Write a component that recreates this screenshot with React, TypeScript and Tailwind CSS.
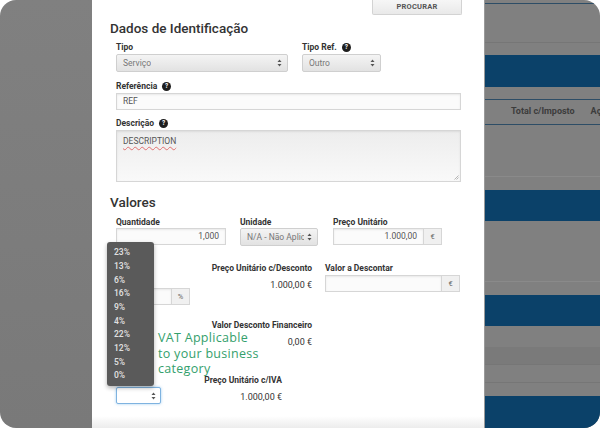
import type { ReactNode } from "react";

const vatRates = ["23%", "13%", "6%", "16%", "9%", "4%", "22%", "12%", "5%", "0%"];

function Help() {
  return (
    <span className="ml-[5px] inline-flex h-[9px] w-[9px] items-center justify-center rounded-full bg-[#1e1e1e] text-[6.5px] font-bold leading-none text-white">
      ?
    </span>
  );
}

function Label({ children, help }: { children?: ReactNode; help?: boolean }) {
  return (
    <div className="flex h-[11px] items-center whitespace-nowrap text-[8.5px] font-bold leading-[11px] text-[#333]">
      {children}
      {help && <Help />}
    </div>
  );
}

function Arrows() {
  return (
    <svg width="5" height="8" viewBox="0 0 5 8" className="shrink-0">
      <path d="M2.5 0.5 L4.5 3 L0.5 3 Z" fill="#555" />
      <path d="M2.5 7.5 L4.5 5 L0.5 5 Z" fill="#555" />
    </svg>
  );
}

function Select({ value, className }: { value: string; className: string }) {
  return (
    <div
      className={`flex h-[18px] items-center justify-between gap-[3px] rounded-[2px] border border-[#cfcfcf] bg-gradient-to-b from-[#f4f4f4] to-[#e2e2e2] pl-[6px] pr-[5px] text-[8.5px] text-[#777] ${className}`}
    >
      <span className="overflow-hidden whitespace-nowrap">{value}</span>
      <Arrows />
    </div>
  );
}

function Input({ value, className, right }: { value?: string; className: string; right?: boolean }) {
  return (
    <div
      className={`flex h-[17px] items-center border border-[#d6d6d6] bg-[#fbfbfb] px-[6px] text-[8.5px] text-[#555] shadow-[inset_0_1px_2px_rgba(0,0,0,0.08)] ${right ? "justify-end" : ""} ${className}`}
    >
      {value}
    </div>
  );
}

function Addon({ children }: { children: ReactNode }) {
  return (
    <div className="flex h-[17px] w-[18px] items-center justify-center border border-l-0 border-[#d6d6d6] bg-[#f0f0f0] text-[7.5px] text-[#666]">
      {children}
    </div>
  );
}

function Value({ children }: { children: ReactNode }) {
  return <div className="h-[11px] text-[9px] leading-[11px] text-[#333]">{children}</div>;
}

export default function App() {
  return (
    <div className="bg-white">
      <div className="relative flex h-[428px] w-[600px] overflow-hidden rounded-[16px] font-['Roboto',sans-serif]">
        {/* dimmed page on the left */}
        <div className="w-[92px] shrink-0 bg-gradient-to-b from-[#808080] to-[#797979]" />

        {/* modal body */}
        <div className="flex w-[392px] shrink-0 flex-col bg-white">
          <div className="flex justify-end pr-[22px]">
            <div className="flex h-[15px] w-[90px] items-center justify-center rounded-b-[2px] border border-t-0 border-[#d3d3d3] bg-gradient-to-b from-[#f6f6f6] to-[#e9e9e9] text-[7.5px] font-bold tracking-[0.2px] text-[#555]">
              PROCURAR
            </div>
          </div>

          <div className="pl-[18px]">
            <h2 className="mt-[5px] h-[16px] text-[13.5px] font-medium leading-[16px] text-[#333]">
              Dados de Identificação
            </h2>

            <div className="pl-[6px]">
              <div className="mt-[6px] flex gap-[14px]">
                <div>
                  <Label>Tipo</Label>
                  <Select value="Serviço" className="mt-[1px] w-[172px]" />
                </div>
                <div>
                  <Label help>Tipo Ref.</Label>
                  <Select value="Outro" className="mt-[1px] w-[79px]" />
                </div>
              </div>

              <div className="mt-[9px]">
                <Label help>Referência</Label>
                <Input value="REF" className="mt-[1px] w-[345px]" />
              </div>

              <div className="mt-[8px]">
                <Label help>Descrição</Label>
                <div className="relative mt-[1px] h-[52px] w-[345px] border border-[#d6d6d6] bg-gradient-to-b from-[#ededed] to-[#f9f9f9] px-[6px] pt-[4px] text-[8.5px] text-[#555] shadow-[inset_0_1px_2px_rgba(0,0,0,0.08)]">
                  <span className="underline decoration-[#e07070] decoration-wavy underline-offset-[2px]">
                    DESCRIPTION
                  </span>
                  <svg width="5" height="5" viewBox="0 0 5 5" className="absolute bottom-[1px] right-[1px]">
                    <path d="M4.5 0.5 L0.5 4.5 M4.5 2.5 L2.5 4.5" stroke="#999" strokeWidth="0.7" />
                  </svg>
                </div>
              </div>
            </div>

            <h2 className="mt-[12px] h-[16px] text-[13.5px] font-medium leading-[16px] text-[#333]">
              Valores
            </h2>

            <div className="pl-[6px]">
              <div className="mt-[7px] flex">
                <div className="w-[110px]">
                  <Label>Quantidade</Label>
                  <Input value="1,000" right className="w-[110px]" />
                </div>
                <div className="ml-[14px] w-[78px]">
                  <Label>Unidade</Label>
                  <Select value="N/A - Não Aplicável" className="w-[78px]" />
                </div>
                <div className="ml-[15px]">
                  <Label>Preço Unitário</Label>
                  <div className="flex">
                    <Input value="1.000,00" right className="w-[91px]" />
                    <Addon>€</Addon>
                  </div>
                </div>
              </div>

              <div className="mt-[17px] flex">
                <div className="w-[76px]">
                  <Label />
                  <div className="mt-[14px] flex">
                    <Input className="w-[56px]" />
                    <Addon>%</Addon>
                  </div>
                </div>
                <div className="ml-[8px] flex w-[112px] flex-col items-end">
                  <Label>Preço Unitário c/Desconto</Label>
                  <div className="mt-[6px]">
                    <Value>1.000,00 €</Value>
                  </div>
                </div>
                <div className="ml-[13px]">
                  <Label>Valor a Descontar</Label>
                  <div className="mt-[1px] flex">
                    <Input className="w-[117px]" />
                    <Addon>€</Addon>
                  </div>
                </div>
              </div>

              <div className="mt-[15px] flex">
                <div className="w-[76px]" />
                <div className="ml-[8px] flex w-[112px] flex-col items-end">
                  <Label>Valor Desconto Financeiro</Label>
                  <div className="mt-[6px]">
                    <Value>0,00 €</Value>
                  </div>
                </div>
              </div>

              <div className="mt-[27px] flex">
                <div className="w-[45px]">
                  <Label />
                  <div className="mt-[1px] flex h-[17px] w-[45px] items-center justify-end rounded-[2px] border border-[#7fb3e0] bg-white pr-[4px] shadow-[0_0_3px_rgba(102,175,233,0.6)]">
                    <Arrows />
                  </div>
                </div>
                <div className="ml-[9px] flex w-[112px] flex-col items-end">
                  <Label>Preço Unitário c/IVA</Label>
                  <div className="mt-[6px]">
                    <Value>1.000,00 €</Value>
                  </div>
                </div>
              </div>
            </div>
          </div>

          <div className="mt-auto h-[12px] bg-gradient-to-b from-white to-[#ececec]" />
        </div>

        {/* dimmed table behind the modal */}
        <div className="flex min-w-0 flex-1 flex-col overflow-hidden border-l border-[#9a9a9a] bg-[#808080]">
          <div className="h-[3px]" />
          <div className="h-[1px] bg-[#2d4d66]" />
          <div className="h-[39px] border-b border-[#767676]" />
          <div className="h-[12px]" />
          <div className="h-[32px] bg-[#0b4169]" />
          <div className="h-[12px]" />
          <div className="h-[1px] bg-[#2d4d66]" />
          <div className="flex h-[24px] items-center gap-[16px] pl-[26px] text-[9px] font-bold whitespace-nowrap text-[#3c3c3c]">
            <span>Total c/Imposto</span>
            <span>Ações</span>
          </div>
          <div className="h-[1px] bg-[#2d4d66]" />
          <div className="h-[52px] border-b border-[#8a8a8a]" />
          <div className="h-[13px]" />
          <div className="h-[31px] bg-[#0b4169]" />
          <div className="h-[61px] border-b border-[#8a8a8a]" />
          <div className="h-[13px]" />
          <div className="h-[31px] bg-[#0b4169]" />
          <div className="h-[21px]" />
          <div className="h-[18px] border-b border-[#767676] bg-[#7a7a7a]" />
          <div className="h-[18px] border-b border-[#767676]" />
          <div className="h-[13px]" />
          <div className="flex-1 bg-[#0b4169]" />
        </div>

        {/* open VAT rate list */}
        <div className="absolute left-[107px] top-[242px] w-[47px] rounded-[3px] bg-[#5a5a5a] pb-[3px] pl-[7px] pt-[4px] shadow-[0_2px_4px_rgba(0,0,0,0.3)]">
          {vatRates.map((rate) => (
            <div key={rate} className="flex h-[13.67px] items-center text-[8.5px] font-semibold text-[#dedede]">
              {rate}
            </div>
          ))}
        </div>

        {/* annotation */}
        <div className="pointer-events-none absolute left-[158px] top-[330px] font-['Open_Sans',sans-serif] text-[12.5px] leading-[15.5px] tracking-[0.3px] text-[#34a06c]">
          <div>VAT Applicable</div>
          <div>to your business</div>
          <div>category</div>
        </div>
      </div>
    </div>
  );
}
